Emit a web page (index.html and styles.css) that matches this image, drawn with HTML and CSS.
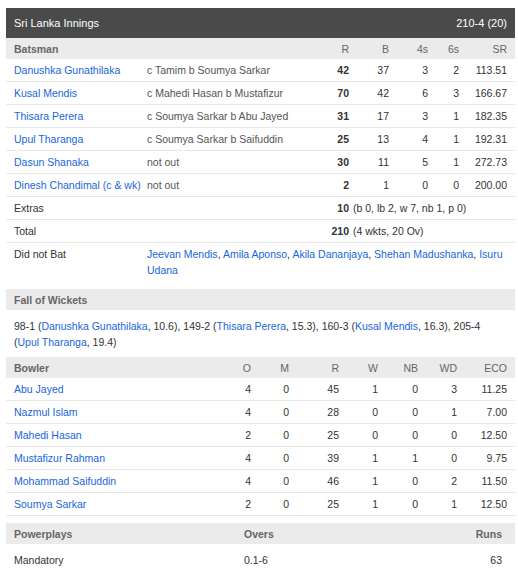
FILE: index.html
```html
<!DOCTYPE html>
<html lang="en">
<head>
	<meta charset="UTF-8">
	<title>Sri Lanka Innings</title>
	<link rel="stylesheet" href="styles.css">
</head>
<body>
<div class="innings">
	<!-- Innings header -->
	<div class="inn-head">
		<span>Sri Lanka Innings</span>
		<span>210-4 (20)</span>
	</div>

	<!-- Batting -->
	<div class="bat-row sub-head">
		<div class="title">Batsman</div>
		<div></div>
		<div class="num">R</div>
		<div class="num">B</div>
		<div class="num">4s</div>
		<div class="num">6s</div>
		<div class="num">SR</div>
	</div>
	<div class="bat-row">
		<a href="#">Danushka Gunathilaka</a>
		<div class="how">c Tamim b Soumya Sarkar</div>
		<div class="num bold">42</div><div class="num">37</div><div class="num">3</div><div class="num">2</div><div class="num">113.51</div>
	</div>
	<div class="bat-row">
		<a href="#">Kusal Mendis</a>
		<div class="how">c Mahedi Hasan b Mustafizur</div>
		<div class="num bold">70</div><div class="num">42</div><div class="num">6</div><div class="num">3</div><div class="num">166.67</div>
	</div>
	<div class="bat-row">
		<a href="#">Thisara Perera</a>
		<div class="how">c Soumya Sarkar b Abu Jayed</div>
		<div class="num bold">31</div><div class="num">17</div><div class="num">3</div><div class="num">1</div><div class="num">182.35</div>
	</div>
	<div class="bat-row">
		<a href="#">Upul Tharanga</a>
		<div class="how">c Soumya Sarkar b Saifuddin</div>
		<div class="num bold">25</div><div class="num">13</div><div class="num">4</div><div class="num">1</div><div class="num">192.31</div>
	</div>
	<div class="bat-row">
		<a href="#">Dasun Shanaka</a>
		<div class="how">not out</div>
		<div class="num bold">30</div><div class="num">11</div><div class="num">5</div><div class="num">1</div><div class="num">272.73</div>
	</div>
	<div class="bat-row">
		<a href="#">Dinesh Chandimal (c &amp; wk)</a>
		<div class="how">not out</div>
		<div class="num bold">2</div><div class="num">1</div><div class="num">0</div><div class="num">0</div><div class="num">200.00</div>
	</div>
	<div class="bat-row">
		<div class="label">Extras</div>
		<div class="num bold">10</div>
		<div class="detail">(b 0, lb 2, w 7, nb 1, p 0)</div>
	</div>
	<div class="bat-row">
		<div class="label">Total</div>
		<div class="num bold">210</div>
		<div class="detail">(4 wkts, 20 Ov)</div>
	</div>
	<div class="bat-row dnb">
		<div>Did not Bat</div>
		<div class="names">
			<a href="#">Jeevan Mendis</a>, <a href="#">Amila Aponso</a>, <a href="#">Akila Dananjaya</a>, <a href="#">Shehan Madushanka</a>, <a href="#">Isuru Udana</a>
		</div>
	</div>

	<!-- Fall of wickets -->
	<div class="sub-head block-head">
		<div class="title">Fall of Wickets</div>
	</div>
	<div class="fow">
		<span>98-1 (<a href="#">Danushka Gunathilaka</a>, 10.6),</span>
		<span>149-2 (<a href="#">Thisara Perera</a>, 15.3),</span>
		<span>160-3 (<a href="#">Kusal Mendis</a>, 16.3),</span>
		<span>205-4 (<a href="#">Upul Tharanga</a>, 19.4)</span>
	</div>

	<!-- Bowling -->
	<div class="bowl-row sub-head">
		<div class="title">Bowler</div>
		<div class="num">O</div>
		<div class="num">M</div>
		<div class="num">R</div>
		<div class="num">W</div>
		<div class="num">NB</div>
		<div class="num">WD</div>
		<div class="num">ECO</div>
	</div>
	<div class="bowl-row">
		<a href="#">Abu Jayed</a>
		<div class="num">4</div><div class="num">0</div><div class="num">45</div><div class="num">1</div><div class="num">0</div><div class="num">3</div><div class="num">11.25</div>
	</div>
	<div class="bowl-row">
		<a href="#">Nazmul Islam</a>
		<div class="num">4</div><div class="num">0</div><div class="num">28</div><div class="num">0</div><div class="num">0</div><div class="num">1</div><div class="num">7.00</div>
	</div>
	<div class="bowl-row">
		<a href="#">Mahedi Hasan</a>
		<div class="num">2</div><div class="num">0</div><div class="num">25</div><div class="num">0</div><div class="num">0</div><div class="num">0</div><div class="num">12.50</div>
	</div>
	<div class="bowl-row">
		<a href="#">Mustafizur Rahman</a>
		<div class="num">4</div><div class="num">0</div><div class="num">39</div><div class="num">1</div><div class="num">1</div><div class="num">0</div><div class="num">9.75</div>
	</div>
	<div class="bowl-row">
		<a href="#">Mohammad Saifuddin</a>
		<div class="num">4</div><div class="num">0</div><div class="num">46</div><div class="num">1</div><div class="num">0</div><div class="num">2</div><div class="num">11.50</div>
	</div>
	<div class="bowl-row">
		<a href="#">Soumya Sarkar</a>
		<div class="num">2</div><div class="num">0</div><div class="num">25</div><div class="num">1</div><div class="num">0</div><div class="num">1</div><div class="num">12.50</div>
	</div>

	<!-- Powerplays -->
	<div class="pp-row sub-head block-head">
		<div class="title">Powerplays</div>
		<div class="title">Overs</div>
		<div class="title num">Runs</div>
	</div>
	<div class="pp-row pp-data">
		<div>Mandatory</div>
		<div>0.1-6</div>
		<div class="num">63</div>
	</div>
</div>
</body>
</html>
```

FILE: styles.css
```css
html {
  margin: 0;
  padding: 0;
}

body {
  margin: 8px 3px 0 6px;
  padding: 0;
  font-family: "Liberation Sans", Arial, sans-serif;
  font-size: 10.5px;
  color: #333;
  background: #fff;
}

a {
  color: #1866db;
  text-decoration: none;
}

.innings {
  width: 509px;
}

/* Dark innings header */
.inn-head {
  display: flex;
  justify-content: space-between;
  align-items: center;
  height: 30px;
  padding: 0 8px;
  background: #4a4a4a;
  color: #fff;
  font-size: 11px;
}

/* Grey sub headers */
.sub-head {
  height: 21px;
  align-items: center;
  background: #ebebeb;
  color: #666;
  border-bottom: none !important;
}
.sub-head .title {
  font-weight: bold;
}
.block-head {
  display: flex;
  padding: 0 8px;
}

.num {
  text-align: right;
}
.bold {
  font-weight: bold;
}

/* Batting rows */
.bat-row {
  display: grid;
  grid-template-columns: 133px 162px 40px 40px 39px 31px 48px;
  align-items: center;
  padding: 0 8px;
  height: 22px;
  border-bottom: 1px solid #e8e8e8;
}
.bat-row.sub-head {
  height: 21px;
}
.bat-row .how {
  color: #555;
  white-space: nowrap;
}
.bat-row .label {
  grid-column: 1 / 3;
}
.bat-row .detail {
  grid-column: 4 / 8;
  padding-left: 4px;
  white-space: nowrap;
}
.bat-row.dnb {
  height: auto;
  align-items: start;
  padding-top: 3px;
  padding-bottom: 4px;
  line-height: 16px;
  border-bottom: none;
}
.bat-row.dnb .names {
  grid-column: 2 / 8;
}

.bat-row.dnb + .block-head {
  margin-top: 7px;
}

/* Fall of wickets */
.fow {
  padding: 8px 26px 7px 8px;
  line-height: 16px;
}

/* Bowling rows */
.bowl-row {
  display: grid;
  grid-template-columns: 197px 40px 38px 50px 39px 40px 39px 50px;
  align-items: center;
  padding: 0 8px;
  height: 22px;
  border-bottom: 1px solid #e8e8e8;
}
.bowl-row.sub-head {
  height: 21px;
}
.bowl-row .num {
  white-space: nowrap;
}
.bowl-row:last-of-type {
  border-bottom: none;
}

/* Powerplays */
.pp-row {
  display: grid;
  grid-template-columns: 230px 1fr 60px;
  align-items: center;
  padding: 0 13px 0 8px;
}
.pp-row.block-head {
  display: grid;
  margin-top: 7px;
  padding-right: 13px;
}
.pp-data {
  height: 32px;
}
```
